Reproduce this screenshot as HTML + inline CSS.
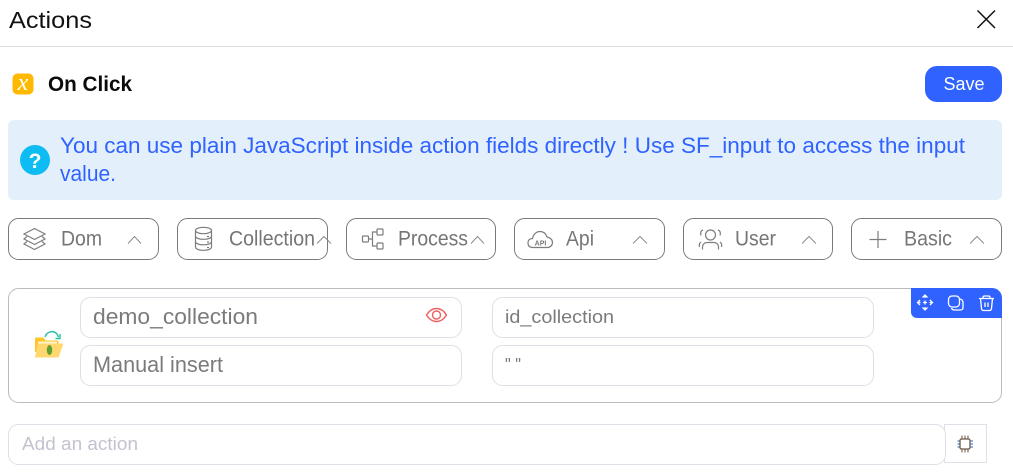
<!DOCTYPE html>
<html><head><meta charset="utf-8"><style>
html,body{margin:0;padding:0;background:#fff;width:1013px;height:472px;overflow:hidden}
svg{display:block}
text{font-family:"Liberation Sans",sans-serif}
.tab{fill:#fff;stroke:#7a7a7a;stroke-width:1}
.t{fill:#767676;font-size:21.500px}
.chev{fill:none;stroke:#8c8c8c;stroke-width:1}
.ic{fill:none;stroke:#7d7d7d;stroke-width:1.200}
.inp{fill:#fff;stroke:#dfdfe8;stroke-width:1}
.w{fill:none;stroke:#fff;stroke-width:1.300}
</style></head><body>
<svg width="1013" height="472" viewBox="0 0 1013 472" xmlns="http://www.w3.org/2000/svg">
<rect width="1013" height="472" fill="#fff"/>
<text x="9" y="28" font-size="23.500" fill="#111" textLength="83" lengthAdjust="spacingAndGlyphs">Actions</text>
<path d="M977.500 10.500L995 28M995 10.500L977.500 28" stroke="#111" stroke-width="1.500" fill="none"/>
<rect x="0" y="46" width="1013" height="1" fill="#dedede"/>

<rect x="12.500" y="73.500" width="21" height="21" rx="5" fill="#ffb900"/>
<text x="23" y="90" font-size="24" fill="#fff" text-anchor="middle" font-style="italic" style="font-family:'Liberation Serif',serif">x</text>
<text x="48" y="91" font-size="21" font-weight="700" fill="#0a0a0a" textLength="84" lengthAdjust="spacingAndGlyphs">On Click</text>
<rect x="925" y="66" width="77" height="36" rx="12" fill="#2f62ff"/>
<text x="964" y="90" font-size="18.500" fill="#fff" text-anchor="middle" textLength="41" lengthAdjust="spacingAndGlyphs">Save</text>

<rect x="8" y="120" width="994" height="80" rx="6" fill="#e3f0fb"/>
<circle cx="35" cy="160" r="15" fill="#0dbcf2"/>
<text x="35" y="168" font-size="21" font-weight="700" fill="#fff" text-anchor="middle">?</text>
<text x="60" y="153" font-size="22" fill="#2f62ff" textLength="905" lengthAdjust="spacingAndGlyphs">You can use plain JavaScript inside action fields directly ! Use SF_input to access the input</text>
<text x="60" y="181" font-size="22" fill="#2f62ff" textLength="56" lengthAdjust="spacingAndGlyphs">value.</text>

<rect class="tab" x="8.500" y="218.500" width="150" height="41" rx="10"/>
<rect class="tab" x="177.500" y="218.500" width="150" height="41" rx="10"/>
<rect class="tab" x="346.500" y="218.500" width="149" height="41" rx="10"/>
<rect class="tab" x="514.500" y="218.500" width="150" height="41" rx="10"/>
<rect class="tab" x="683.500" y="218.500" width="149" height="41" rx="10"/>
<rect class="tab" x="851.500" y="218.500" width="150" height="41" rx="10"/>

<text class="t" x="61" y="245.500" textLength="41" lengthAdjust="spacingAndGlyphs">Dom</text>
<text class="t" x="229" y="245.500" textLength="86" lengthAdjust="spacingAndGlyphs">Collection</text>
<text class="t" x="398" y="245.500" textLength="70" lengthAdjust="spacingAndGlyphs">Process</text>
<text class="t" x="566" y="245.500" textLength="28" lengthAdjust="spacingAndGlyphs">Api</text>
<text class="t" x="735" y="245.500" textLength="41" lengthAdjust="spacingAndGlyphs">User</text>
<text class="t" x="904" y="245.500" textLength="48" lengthAdjust="spacingAndGlyphs">Basic</text>

<path class="chev" d="M128 243.500L134.500 236.500L141 243.500"/>
<path class="chev" d="M317 243.500L324 236.500L331 243.500"/>
<path class="chev" d="M471 243.500L477.500 236.500L484 243.500"/>
<path class="chev" d="M633 243.500L640 236.500L647 243.500"/>
<path class="chev" d="M802 243.500L809 236.500L816 243.500"/>
<path class="chev" d="M970 243.500L977 236.500L984 243.500"/>

<!-- layers -->
<path class="ic" d="M34.500 228.500L45 234L34.500 239.500L24 234ZM27 236.500L24 239L34.500 244.500L45 239L42 236.500M27 241.500L24 244L34.500 249.500L45 244L42 241.500"/>
<!-- db -->
<g class="ic"><ellipse cx="203.500" cy="230.500" rx="8" ry="3.200"/><path d="M195.500 230.500V247c0 2 3.500 3.300 8 3.300s8-1.300 8-3.300V230.500M195.500 236c0 2 3.500 3.300 8 3.300s8-1.300 8-3.300M195.500 241.500c0 2 3.500 3.300 8 3.300s8-1.300 8-3.300"/><path d="M207 236.500h2M207 242h2M207 247.500h2"/></g>
<!-- process -->
<g class="ic"><rect x="362.500" y="236" width="6" height="6" rx="1"/><rect x="377" y="229" width="6" height="6" rx="1"/><rect x="377" y="243" width="6" height="6" rx="1"/><path d="M368.500 239H372.500M377 232H372.500V246H377"/></g>
<!-- cloud api -->
<path class="ic" d="M533 247.500c-3 0-5-1.500-5-4.500s2-4.500 4.500-4.500c1-4.500 4-7 7.500-7 4 0 6 2.500 7 5.500 3 .5 5.500 2.500 5.500 5.500s-2.500 5-5 5Z"/>
<text x="540.500" y="245.500" font-size="7" fill="#777" text-anchor="middle" font-weight="700">API</text>
<!-- user -->
<g class="ic"><circle cx="710.500" cy="235" r="5"/><path d="M702.500 249.500v-2.500c0-2.500 2-4.500 4.500-4.500h7c2.500 0 4.500 2 4.500 4.500v2.500M703 230c-2 .5-3 3-2 5.500M718 230c2 .5 3 3 2 5.500M699.500 247c-.5-2 0-4 1.500-5M721.500 247c.5-2 0-4-1.500-5"/></g>
<!-- plus -->
<path d="M878 231V248M869.500 239.500H886.500" stroke="#7d7d7d" stroke-width="1.200" fill="none"/>

<rect x="8.500" y="288.500" width="993" height="114" rx="10" fill="#fff" stroke="#bbb"/>
<path d="M911 288H992a10 10 0 0 1 10 10V318H917a6 6 0 0 1-6-6Z" fill="#2f62ff"/>
<!-- move -->
<g class="w"><path d="M925 295V298M925 307V310M917.500 302.500H920.500M929.500 302.500H932.500M922.500 297.500L925 295L927.500 297.500M922.500 307.500L925 310L927.500 307.500M920 300L917.500 302.500L920 305M930 300L932.500 302.500L930 305M925 300.500V304.500M923 302.500H927"/></g>
<!-- copy -->
<g class="w"><rect x="948.500" y="296" width="11" height="11" rx="3.500"/><path d="M960 299c2 .5 3 1.500 3 3.500v5c0 1.500-1 2.500-2.500 2.500h-6c-1.500 0-2.500-.5-3-2"/></g>
<!-- trash -->
<g class="w"><path d="M979 298.500H994M983 298.500v-1c0-1 .5-1.500 1.500-1.500h4c1 0 1.500.5 1.500 1.500v1M980.500 298.500l1 10c0 1 1 2 2 2h6c1 0 2-1 2-2l1-10M985 302.500v4.500M988 302.500v4.500"/></g>

<!-- folder -->
<path d="M35 339c0-1 .5-1.500 1.500-1.500h6c1 0 1.500.5 2 1.500l1 1.500H57c1 0 1.500.5 1.500 1.500V352H35Z" fill="#ffc425"/>
<path d="M38 341.500H57V351H38Z" fill="#fff3d0"/>
<path d="M37.500 343.500H62c.8 0 1.200.6 1 1.300L58.500 357.500H35Z" fill="#ffd76e"/>
<ellipse cx="49.500" cy="350" rx="2.700" ry="5" fill="#5f9e33"/>
<path d="M45 337c1.500-5 8-7.500 12-3l1.500 3" fill="none" stroke="#27bfa5" stroke-width="1.400"/>
<path d="M60 334v4.500h-4.500" fill="none" stroke="#27bfa5" stroke-width="1.400"/>

<rect class="inp" x="80.500" y="297.500" width="381" height="40" rx="10"/>
<rect class="inp" x="80.500" y="345.500" width="381" height="40" rx="10"/>
<rect class="inp" x="492.500" y="297.500" width="381" height="40" rx="10"/>
<rect class="inp" x="492.500" y="345.500" width="381" height="40" rx="10"/>
<text x="93" y="324" font-size="22" fill="#7b7b7b" textLength="165" lengthAdjust="spacingAndGlyphs">demo_collection</text>
<text x="93" y="372" font-size="22" fill="#7b7b7b" textLength="130" lengthAdjust="spacingAndGlyphs">Manual insert</text>
<text x="505" y="323" font-size="18" fill="#7b7b7b" textLength="109" lengthAdjust="spacingAndGlyphs">id_collection</text>
<text x="505" y="371" font-size="18" fill="#7b7b7b" textLength="16" lengthAdjust="spacingAndGlyphs">" "</text>
<g fill="none" stroke="#ee5f5f" stroke-width="1.400"><path d="M426.500 315c2.500-4 5.500-6.500 10-6.500s7.500 2.500 10 6.500c-2.500 4-5.500 6.500-10 6.500s-7.500-2.500-10-6.500Z"/><circle cx="436.500" cy="315" r="4"/></g>

<rect x="944.500" y="424.500" width="42" height="38" fill="#fff" stroke="#dfdfe8"/>
<rect x="8.500" y="424.500" width="937" height="40" rx="10" fill="#fff" stroke="#dfdfe8"/>
<text x="22" y="450" font-size="18" fill="#c3c3d0" textLength="116" lengthAdjust="spacingAndGlyphs">Add an action</text>
<path d="M962 435.500v4M965 435.500v4M968 435.500v4M962 448.500v4M965 448.500v4M968 448.500v4" stroke="#8a6f5a" stroke-width="1.200"/>
<path d="M957.500 441h3M957.500 444h3M957.500 447h3M969.500 441h3.500M969.500 444h3.500M969.500 447h3.500" stroke="#4d84c9" stroke-width="1.200"/>
<rect x="960" y="439" width="10" height="10" rx="1.500" fill="#fff" stroke="#6b5a4a" stroke-width="1.300"/>
</svg>
</body></html>
